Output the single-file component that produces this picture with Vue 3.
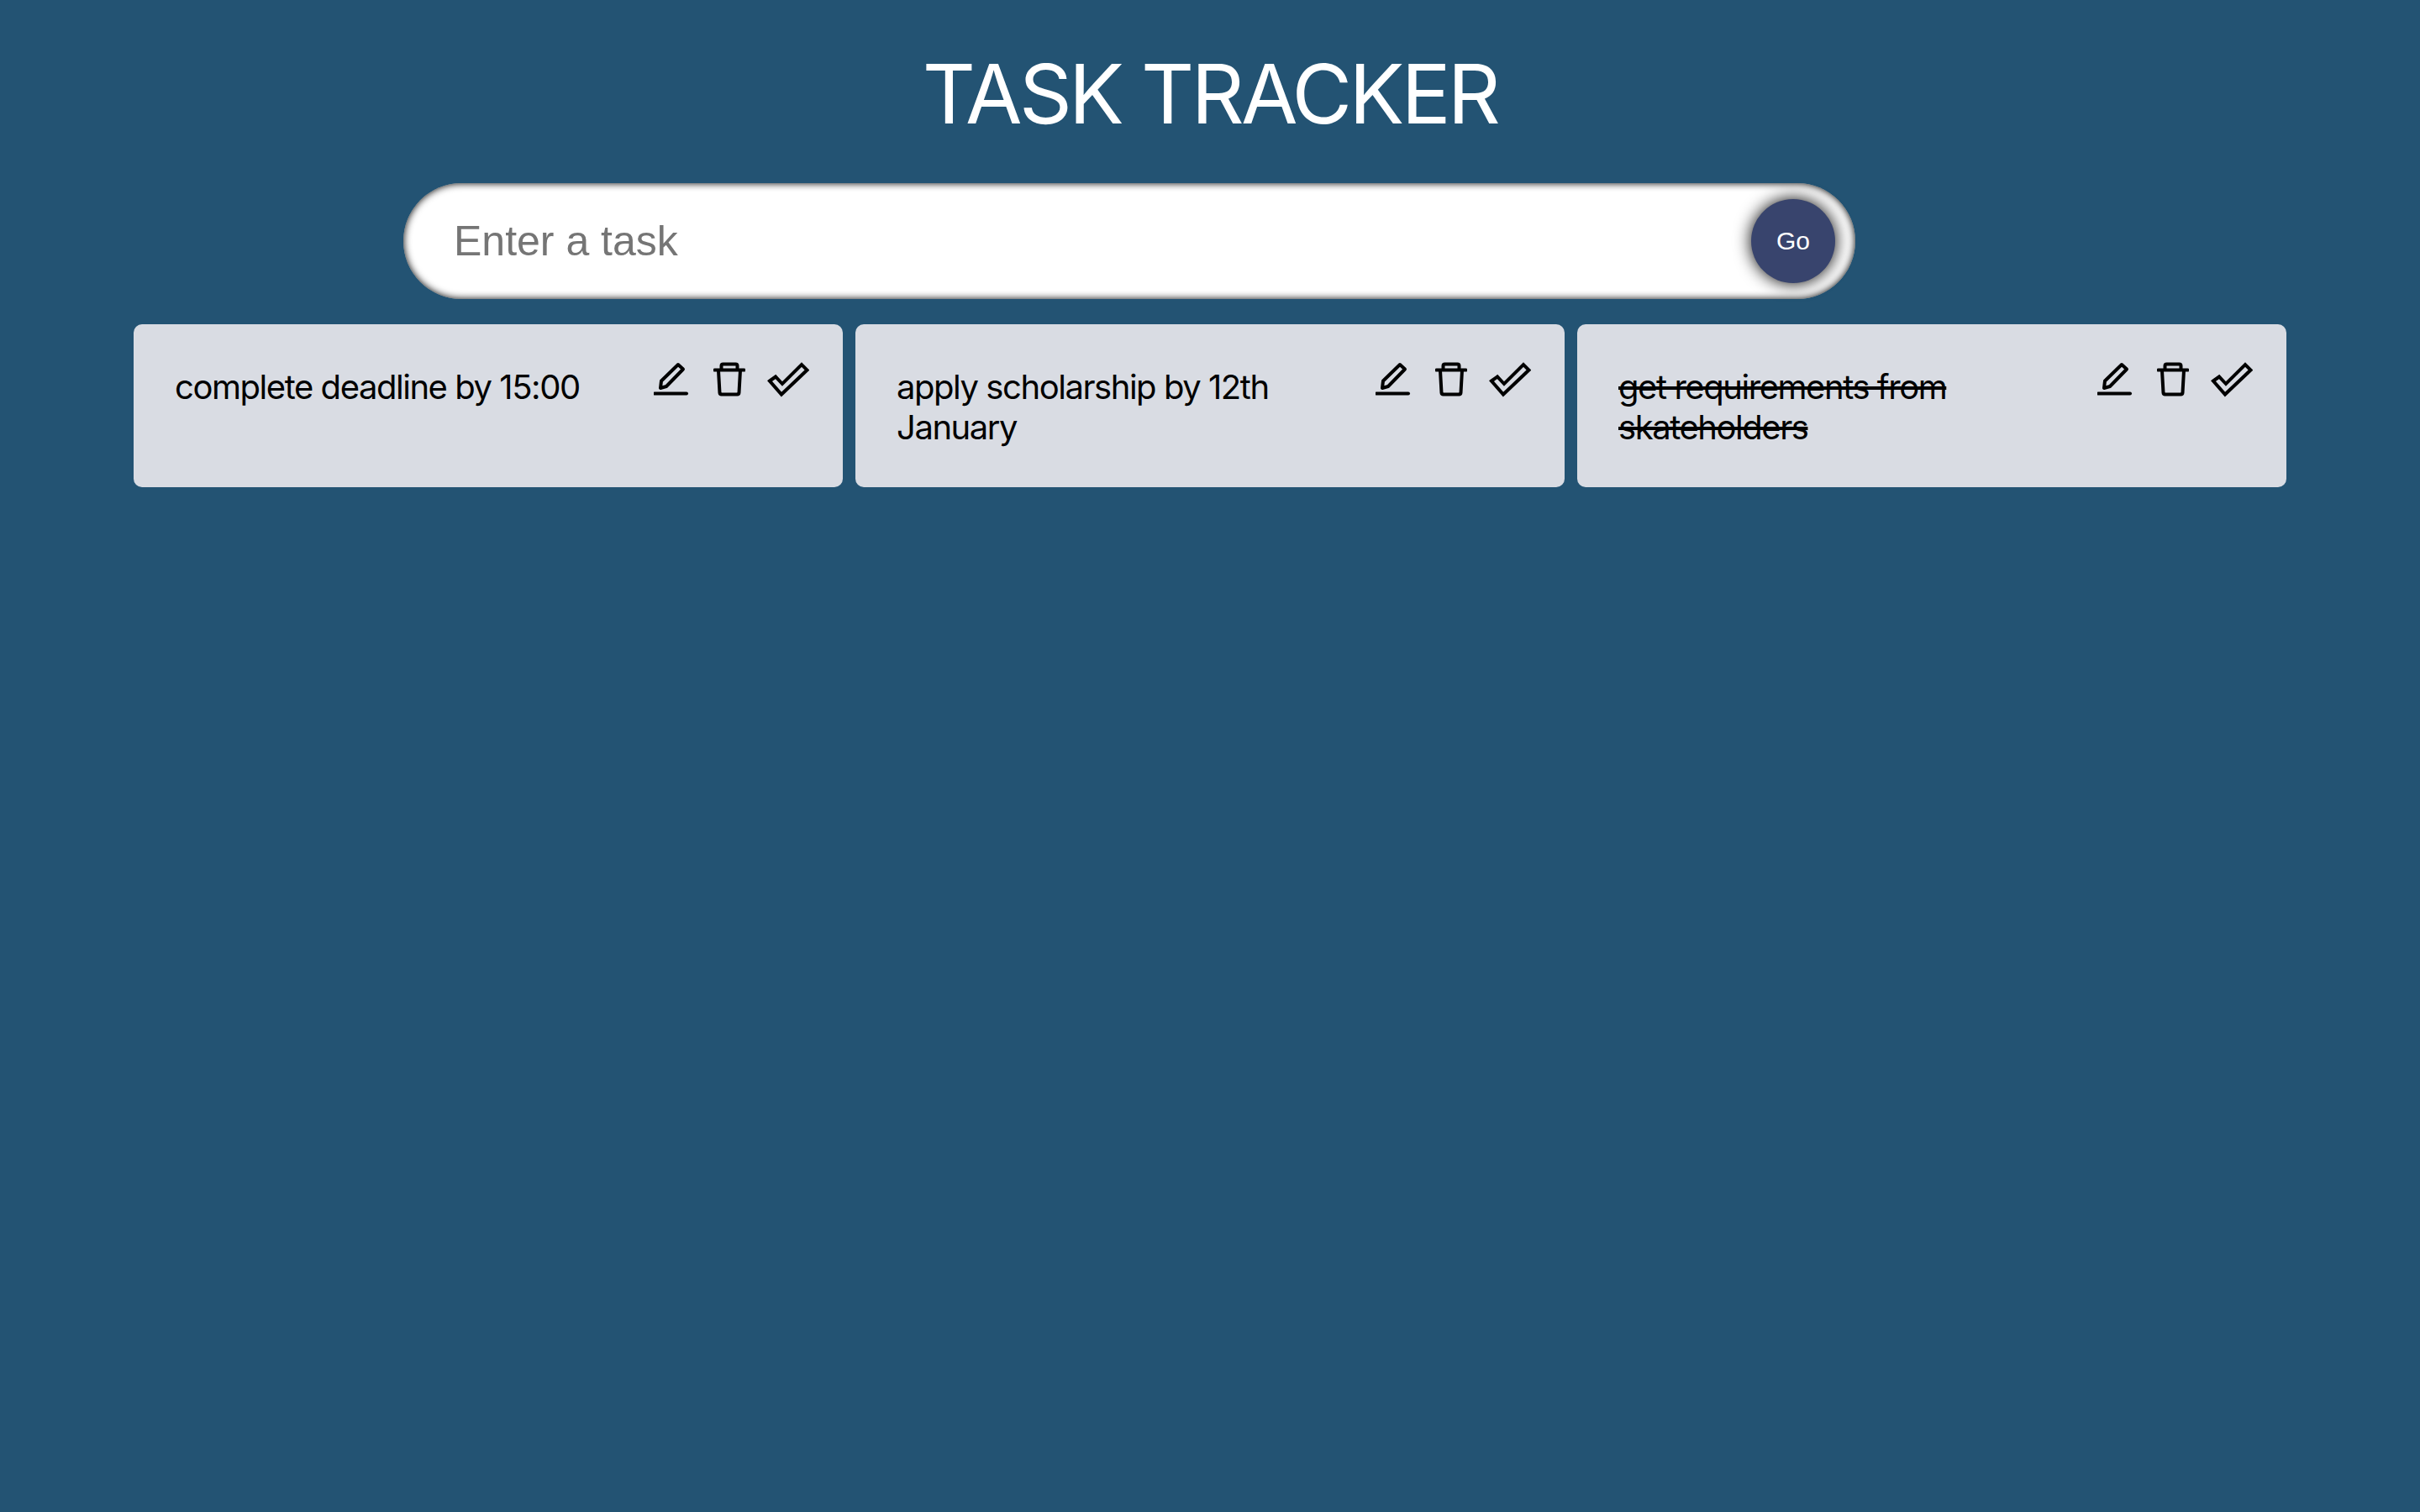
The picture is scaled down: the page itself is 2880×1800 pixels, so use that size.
<script setup>
const tasks = [
  { id: 1, text: 'complete deadline by 15:00', done: false },
  { id: 2, text: 'apply scholarship by 12th January', done: false },
  { id: 3, text: 'get requirements from skateholders', done: true }
]
</script>

<template>
  <div class="app">
    <h1 class="heading">TASK TRACKER</h1>

    <form class="task-form" @submit.prevent>
      <input class="task-input" type="text" placeholder="Enter a task" />
      <button class="task-go" type="submit">Go</button>
    </form>

    <div class="tasks">
      <div v-for="t in tasks" :key="t.id" class="task-card">
        <span class="task-text" :class="{ done: t.done }">{{ t.text }}</span>
        <div class="task-icons">
          <svg class="ico" width="45" height="41" viewBox="28 21 45 41" fill="none" stroke="#000" stroke-width="4">
            <path d="M36 52 37 43.500 57 24 63 29.500 43 50Z" stroke-linejoin="round" />
            <path d="M29 58.500H67" stroke-linecap="round" />
          </svg>
          <svg class="ico" width="38" height="41" viewBox="99 21 38 41" fill="none" stroke="#000" stroke-width="4">
            <path d="M100.500 30.500H135.500" stroke-linecap="round" />
            <path d="M108.500 30V25.500Q108.500 23.500 110.500 23.500H125.500Q127.500 23.500 127.500 25.500V30" />
            <path d="M105 31 106.500 57.500Q106.700 59.500 108.500 59.500H127.500Q129.300 59.500 129.500 57.500L131 31" />
          </svg>
          <svg class="ico" width="50" height="42" viewBox="163 21 50 42" fill="none" stroke="#000" stroke-width="4">
            <path d="M166 43.500 173 38.500 181 47 204 24 210.500 30.500 180 59.500Z" stroke-linejoin="miter" />
          </svg>
        </div>
      </div>
    </div>
  </div>
</template>

<style>
html, body {
  margin: 0;
  background: #235373;
}
</style>

<style scoped>
.app {
  min-height: 1800px;
  background: #235373;
  font-family: Inter, "Liberation Sans", sans-serif;
}

.heading {
  margin: 0;
  padding-top: 53px;
  height: 166px;
  box-sizing: border-box;
  line-height: 118px;
  font-size: 98px;
  font-weight: 400;
  letter-spacing: -3.7px;
  color: #fff;
  text-align: center;
}

/* input + round button */
.task-form {
  position: relative;
  width: 1728px;
  height: 138px;
  margin: 52px 0 0 480px;
}

.task-input {
  width: 100%;
  height: 100%;
  box-sizing: border-box;
  padding: 0 60px;
  border: none;
  border-radius: 100px;
  outline: none;
  background: #fff;
  font-family: "Liberation Sans", Arial, sans-serif;
  font-size: 50px;
  box-shadow: inset 0 0 10px #000;
}

.task-input::placeholder {
  color: #757575;
}

.task-go {
  position: absolute;
  top: 19px;
  right: 24px;
  width: 100px;
  height: 100px;
  border: none;
  border-radius: 50%;
  background: #38446d;
  color: #fff;
  font-family: "Liberation Sans", Arial, sans-serif;
  font-size: 30px;
  box-shadow: 0 0 20px #000;
}

/* cards */
.tasks {
  display: grid;
  grid-template-columns: repeat(3, 844px);
  gap: 15px;
  margin: 30px 0 0 159px;
}

.task-card {
  display: flex;
  justify-content: space-between;
  align-items: flex-start;
  height: 194px;
  box-sizing: border-box;
  padding: 45px 40px 0 49px;
  border-radius: 10px;
  background: #d9dce3;
}

.task-text {
  flex: 1;
  padding: 6px 60px 0 0;
  font-size: 40px;
  line-height: 48px;
  letter-spacing: -1.45px;
  color: #000;
}

.task-text.done {
  text-decoration: line-through;
}

.task-icons {
  display: flex;
  gap: 26px;
  flex-shrink: 0;
}

.ico {
  display: block;
}
</style>
